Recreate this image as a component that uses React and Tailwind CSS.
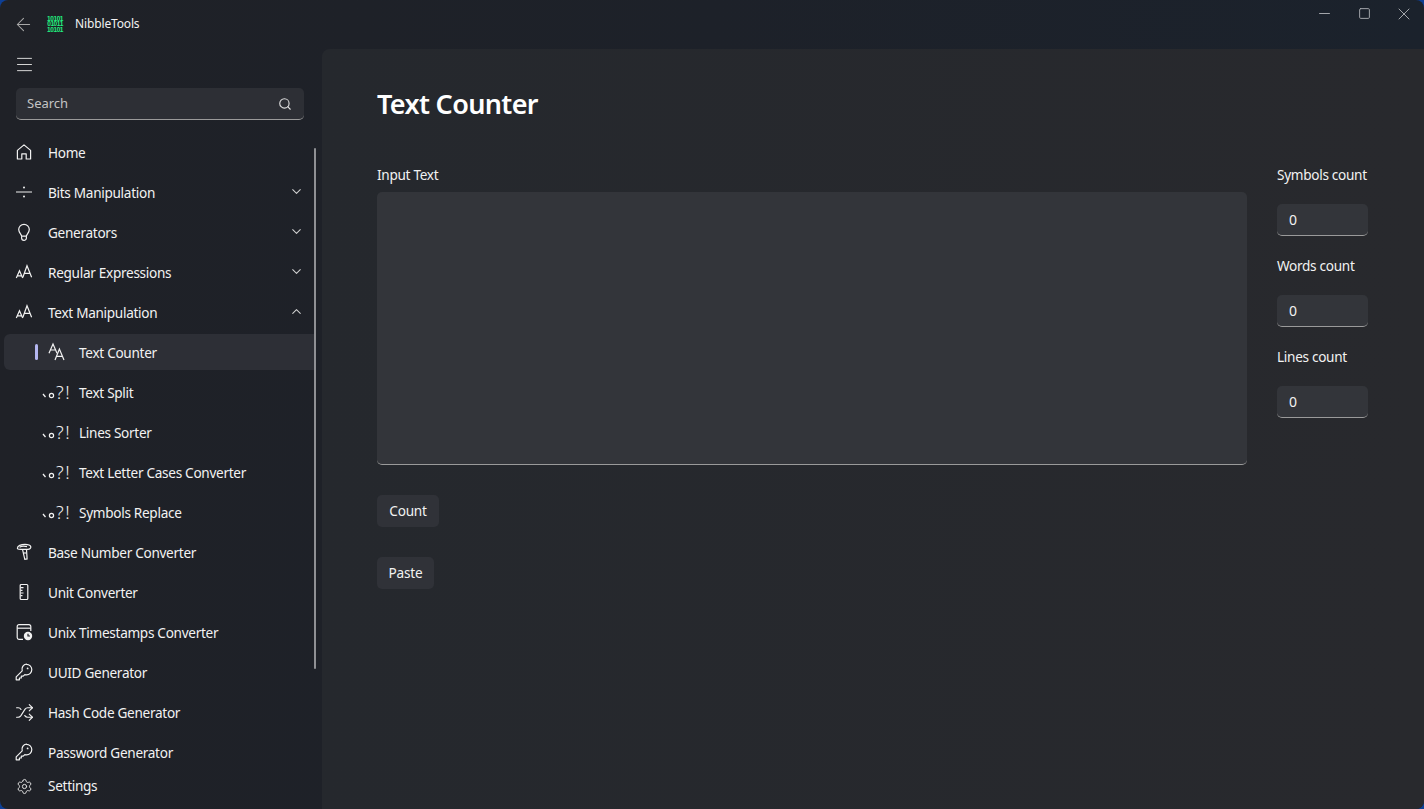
import React from "react";
import { ChevronDown, ChevronUp, Search, Shuffle, Settings, ArrowLeft, Menu, Minus, Square, X } from "lucide-react";

const S = (p) => <svg width="20" height="20" viewBox="0 0 20 20" fill="none" stroke="currentColor" strokeWidth="1.2" {...p} />;

const HomeIcon = () => (
  <S>
    <path d="M3.400 17V8.400L10 2.900l6.600 5.500V17h-4.400v-5.200H7.800V17z" strokeLinejoin="round" />
  </S>
);
const DivideIcon = () => (
  <S>
    <path d="M2 10h16" />
    <circle cx="10" cy="5.400" r="1" fill="currentColor" stroke="none" />
    <circle cx="10" cy="14.600" r="1" fill="currentColor" stroke="none" />
  </S>
);
const BulbIcon = () => (
  <S>
    <path d="M7.600 14.200c0-1.800-2.900-3.400-2.900-6.600a5.300 5.300 0 0 1 10.600 0c0 3.200-2.900 4.800-2.900 6.600z" />
    <path d="M7.600 14.200v1.800a2.400 2.400 0 0 0 4.800 0v-1.800" />
  </S>
);
const FontSizeIcon = () => (
  <S>
    <path d="M2.300 16 5.500 8.700l3.200 7.300M3.300 13.800h4.400" />
    <path d="M8.900 15.300 13 3.700l4.600 11.600M10.300 11.300h5.800" />
  </S>
);
const TextIcon = () => (
  <S className="ml-[5px]">
    <path d="M2 11.200 6 2l4 9.200M3.400 8h5.200" />
    <path d="M8 18 12.400 7l4.600 11M9.400 14.400h6.200" />
  </S>
);
const PunctIcon = () => (
  <svg width="32" height="28" viewBox="0 0 32 28" fill="none" stroke="currentColor" strokeWidth="1.2">
    <path d="M1 16l2.500 3" strokeWidth="1.300" />
    <circle cx="9.500" cy="17.500" r="2.100" />
    <text x="14" y="20.500" fill="currentColor" stroke="none" fontSize="18" fontWeight="300" letterSpacing="1.500" fontFamily="'Noto Sans', sans-serif">?!</text>
  </svg>
);
const BaseIcon = () => (
  <S>
    <path d="M3.400 6.200C3.400 3.800 7 2.400 11 2.400c3 0 5.300.8 5.800 2.300.3 1.500-1 2.600-2.900 2.600H6.700c-1.500 0-3.300-.2-3.300-1.100z" />
    <path d="M5.500 5.200c1.800-1 4.700-1.200 7.500-.6M8.500 7.400l2.300 10 2.300-.5-.6-9.500" />
    <path d="M9.400 11h3" />
  </S>
);
const RulerIcon = () => (
  <S>
    <rect x="6.200" y="2.500" width="7.600" height="15" rx="1" />
    <path d="M6.500 5.600h3M6.500 8.300h2M6.500 11h3M6.500 13.700h2" />
  </S>
);
const CalClockIcon = () => (
  <S>
    <path d="M9 17.300H5a1.800 1.800 0 0 1-1.800-1.800V4.500A1.800 1.800 0 0 1 5 2.700h10a1.800 1.800 0 0 1 1.800 1.800V9" />
    <path d="M3.200 6.200h13.600" />
    <circle cx="14" cy="14" r="4.200" fill="currentColor" stroke="none" />
    <path d="M14 11.700V14h2" stroke="#1f2127" />
  </S>
);
const KeyIcon = () => (
  <S>
    <path d="M12.500 2.300a5.300 5.300 0 0 1 5.300 5.300 5.300 5.300 0 0 1-5.300 5.300c-.6 0-1.200-.1-1.700-.3l-1.600 1.600H7.300v1.800H5.400v1.800H2.200v-3l6-6a5.300 5.300 0 0 1 4.300-6.800z" strokeLinejoin="round" />
    <circle cx="13.600" cy="6.400" r=".9" fill="currentColor" stroke="none" />
  </S>
);

const Row = ({ icon, label, chevron }) => (
  <div className="h-9 mb-1 ml-1 w-[310px] flex items-center pl-[12px] pr-[10.500px] shrink-0">
    <span className="w-5 h-5 -ml-[2px] flex items-center justify-center text-[#f2f2f2]">{icon}</span>
    <span className="ml-[14px] pt-[2px] flex-1 text-[13.600px] tracking-[-0.3px] text-[#f2f2f2] leading-5">{label}</span>
    {chevron === "down" && <ChevronDown size={15} strokeWidth={1.7} className="text-[#cfcfcf] -mt-[2px]" />}
    {chevron === "up" && <ChevronUp size={15} strokeWidth={1.7} className="text-[#cfcfcf] -mt-[2px]" />}
  </div>
);

const SubRow = ({ icon, label, active }) => (
  <div className={"h-9 mb-1 ml-1 w-[310px] flex items-center shrink-0 rounded-l-md " + (active ? "bg-[#2d2f36]" : "")}>
    <span className={"ml-[31px] w-[3px] h-4 rounded-sm " + (active ? "bg-[#b4b6f0]" : "")} />
    <span className="ml-[4px] w-8 h-7 -mt-[1px] flex items-center justify-start text-[#f2f2f2]">{icon}</span>
    <span className="ml-[5px] pt-[2px] text-[13.600px] tracking-[-0.3px] text-[#f2f2f2] leading-5">{label}</span>
  </div>
);

const Stat = ({ label }) => (
  <div className="flex flex-col">
    <div className="text-[13.600px] tracking-[-0.3px] leading-5 text-[#f2f2f2] whitespace-nowrap">{label}</div>
    <div className="mt-[19px] mb-5 h-8 rounded-[5px] bg-[#33353a] border-b border-[#9a9a9a] flex items-center pl-3 text-sm text-[#f2f2f2]">0</div>
  </div>
);

const Btn = ({ label, cls }) => (
  <div className={"h-8 rounded-[5px] bg-[#303238] flex items-center justify-center text-[13.600px] tracking-[-0.2px] text-[#f2f2f2] " + cls}>{label}</div>
);

export default function App() {
  return (
    <div className="w-[1424px] h-[809px] bg-[#0d3f96] overflow-hidden" style={{ fontFamily: "'Noto Sans', sans-serif" }}>
      <div className="w-full h-full rounded-lg overflow-hidden flex bg-gradient-to-r from-[#1f2127] via-[#1d2129] to-[#1b222c]">
        <aside className="w-[322px] h-full shrink-0 flex flex-col relative">
          <div className="h-[48px] shrink-0 flex items-center">
            <ArrowLeft size={21} strokeWidth={1.2} className="ml-[13px] text-[#a8a8a8]" />
            <div className="ml-[13px] font-bold text-[6.500px] leading-[5.500px] text-[#22f080] tracking-[-0.4px] text-center" style={{ fontFamily: "'Liberation Sans', sans-serif" }}>
              <div>10101</div>
              <div>01011</div>
              <div>10101</div>
            </div>
            <span className="ml-[12px] text-[12px] tracking-[-0.15px] leading-4 text-[#f2f2f2]">NibbleTools</span>
          </div>
          <div className="h-[32px] shrink-0 flex items-center pl-[13.500px]">
            <Menu size={21} strokeWidth={1.1} className="text-[#dcdcdc]" />
          </div>
          <div className="mt-2 mx-4 h-8 shrink-0 w-[288px] rounded-[5px] bg-[#2d2f35] border-b border-[#9a9a9a] flex items-center justify-between pl-[11px] pr-[12px]">
            <span className="text-[13px] pt-[1px] text-[#c4c4c4]">Search</span>
            <Search size={14} strokeWidth={1.9} className="text-[#e0e0e0]" />
          </div>
          <div className="mt-[14px] h-[630px] overflow-hidden flex flex-col">
            <Row icon={<HomeIcon />} label="Home" />
            <Row icon={<DivideIcon />} label="Bits Manipulation" chevron="down" />
            <Row icon={<BulbIcon />} label="Generators" chevron="down" />
            <Row icon={<FontSizeIcon />} label="Regular Expressions" chevron="down" />
            <Row icon={<FontSizeIcon />} label="Text Manipulation" chevron="up" />
            <SubRow icon={<TextIcon />} label="Text Counter" active />
            <SubRow icon={<PunctIcon />} label="Text Split" />
            <SubRow icon={<PunctIcon />} label="Lines Sorter" />
            <SubRow icon={<PunctIcon />} label="Text Letter Cases Converter" />
            <SubRow icon={<PunctIcon />} label="Symbols Replace" />
            <Row icon={<BaseIcon />} label="Base Number Converter" />
            <Row icon={<RulerIcon />} label="Unit Converter" />
            <Row icon={<CalClockIcon />} label="Unix Timestamps Converter" />
            <Row icon={<KeyIcon />} label="UUID Generator" />
            <Row icon={<Shuffle size={19} strokeWidth={1.4} />} label="Hash Code Generator" />
            <Row icon={<KeyIcon />} label="Password Generator" />
          </div>
          <div className="absolute bottom-[5px] left-0 right-0">
            <div className="h-9 ml-1 w-[310px] flex items-center pl-[12px]">
              <span className="w-5 h-5 -ml-[2px] flex items-center justify-center text-[#e0e0e0]"><Settings size={17} strokeWidth={1.4} /></span>
              <span className="ml-[14px] pt-[1px] text-[13.600px] tracking-[-0.3px] text-[#f2f2f2]">Settings</span>
            </div>
          </div>
          <div className="absolute left-[314px] top-[148px] w-[2px] h-[521px] rounded-full bg-[#8f9094]" />
        </aside>
        <div className="flex-1 flex flex-col min-w-0">
          <div className="h-[49px] shrink-0 flex items-start justify-end text-[#a4a7ac]">
            <div className="w-10 h-[27px] flex items-center justify-center"><Minus size={17} strokeWidth={1.4} /></div>
            <div className="w-10 h-[27px] flex items-center justify-center"><Square size={13} strokeWidth={1.8} /></div>
            <div className="w-10 h-[27px] flex items-center justify-center"><X size={20} strokeWidth={1.2} /></div>
          </div>
          <main className="flex-1 rounded-tl-lg bg-gradient-to-r from-[#25282d] to-[#28292d] pl-[55px] pr-[56px] pt-[37px]">
            <h1 className="text-[27px] tracking-[-0.65px] leading-9 font-semibold text-white">Text Counter</h1>
            <div className="mt-[43px] flex gap-[30px]">
              <div className="flex-1 flex flex-col">
                <div className="text-[13.600px] tracking-[-0.3px] leading-5 text-[#f2f2f2]">Input Text</div>
                <div className="mt-[7px] h-[273px] rounded-[5px] bg-[#33353a] border-b border-[#9a9a9a]" />
                <Btn label="Count" cls="mt-[30px] w-[62px]" />
                <Btn label="Paste" cls="mt-[30px] w-[57px]" />
              </div>
              <div className="w-[91px] flex flex-col">
                <Stat label="Symbols count" />
                <Stat label="Words count" />
                <Stat label="Lines count" />
              </div>
            </div>
          </main>
        </div>
      </div>
    </div>
  );
}
